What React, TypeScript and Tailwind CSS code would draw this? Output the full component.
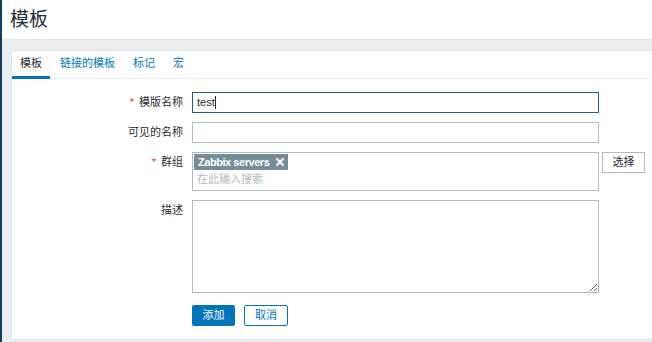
import React from "react";

const FONT = { fontFamily: '"Liberation Sans", Arial, "Noto Sans CJK SC", sans-serif' };

function Label({ text, req }: { text: string; req?: boolean }) {
  return (
    <div className="w-[171px] shrink-0 flex justify-end items-center h-[21px] text-[11px] text-[#1f2c33]">
      {req && <span className="text-[#e33734] mr-[5px]">*</span>}
      <span>{text}</span>
    </div>
  );
}

export default function App() {
  return (
    <div className="w-[652px] h-[342px] overflow-hidden flex" style={FONT}>
      <div className="w-[2px] shrink-0 bg-[#123f5e]" />
      <div className="flex-1 flex flex-col bg-[#ebeef0] min-w-0">
        <header className="h-[40px] shrink-0 bg-white border-b border-[#dfe4e7] flex items-center pl-[8px]">
          <h1 className="text-[19px] leading-none text-[#1f2c33] pb-[1px]">模板</h1>
        </header>
        <div className="flex-1 pt-[10px] pl-[9px] pb-[2px] flex flex-col min-h-0">
          <div className="flex-1 bg-white border-l border-t border-b border-[#dfe4e7] flex flex-col">
            <ul className="flex gap-[2px] border-b border-[#ebeef0] h-[28px] text-[11px]">
              <li className="h-[28px] -mb-[1px] px-[8px] flex items-center border-b-[3px] border-[#0275b8] text-[#1f2c33]">模板</li>
              <li className="h-[28px] -mb-[1px] px-[8px] flex items-center border-b-[3px] border-transparent text-[#0275b8]">链接的模板</li>
              <li className="h-[28px] -mb-[1px] px-[8px] flex items-center border-b-[3px] border-transparent text-[#0275b8]">标记</li>
              <li className="h-[28px] -mb-[1px] px-[8px] flex items-center border-b-[3px] border-transparent text-[#0275b8]">宏</li>
            </ul>
            <div className="pt-[13px] flex flex-col gap-[9px]">
              <div className="flex">
                <Label text="模版名称" req />
                <div className="ml-[9px] w-[407px] h-[21px] border border-[#1d5d89] flex items-center pl-[4px] text-[11px] text-[#1f2c33]">
                  test<span className="inline-block w-[1px] h-[13px] bg-[#1f2c33]" />
                </div>
              </div>
              <div className="flex">
                <Label text="可见的名称" />
                <div className="ml-[9px] w-[407px] h-[21px] border border-[#acbbc2]" />
              </div>
              <div className="flex items-start">
                <Label text="群组" req />
                <div className="ml-[9px] w-[407px] h-[39px] border border-[#acbbc2] flex flex-col p-[1px]">
                  <div className="flex">
                    <span className="h-[16px] bg-[#768d99] text-white text-[11px] font-bold tracking-[-0.45px] flex items-center pl-[4px] pr-[4px] gap-[7px]">
                      Zabbix servers
                      <svg width="8" height="8" viewBox="0 0 8 8">
                        <path d="M1 1 L7 7 M7 1 L1 7" stroke="white" strokeWidth="2.2" strokeLinecap="square" />
                      </svg>
                    </span>
                  </div>
                  <div className="h-[19px] flex items-center pl-[3px] text-[11px] text-[#acbbc2]">在此输入搜索</div>
                </div>
                <button className="ml-[3px] w-[43px] h-[21px] border border-[#acbbc2] bg-white text-[11px] text-[#1f2c33] flex items-center justify-center">
                  选择
                </button>
              </div>
              <div className="flex items-start">
                <div className="w-[171px] shrink-0 flex justify-end pt-[2px] text-[11px] text-[#1f2c33]">描述</div>
                <textarea
                  className="ml-[9px] w-[407px] h-[93px] border border-[#acbbc2] outline-none resize"
                  defaultValue=""
                />
              </div>
              <div className="flex mt-[3px]">
                <div className="w-[171px] shrink-0" />
                <button className="ml-[9px] w-[43px] h-[21px] bg-[#0275b8] rounded-[2px] text-white text-[11px] flex items-center justify-center">
                  添加
                </button>
                <button className="ml-[9px] w-[44px] h-[21px] border border-[#0275b8] rounded-[2px] bg-white text-[#0275b8] text-[11px] flex items-center justify-center">
                  取消
                </button>
              </div>
            </div>
          </div>
        </div>
      </div>
    </div>
  );
}
